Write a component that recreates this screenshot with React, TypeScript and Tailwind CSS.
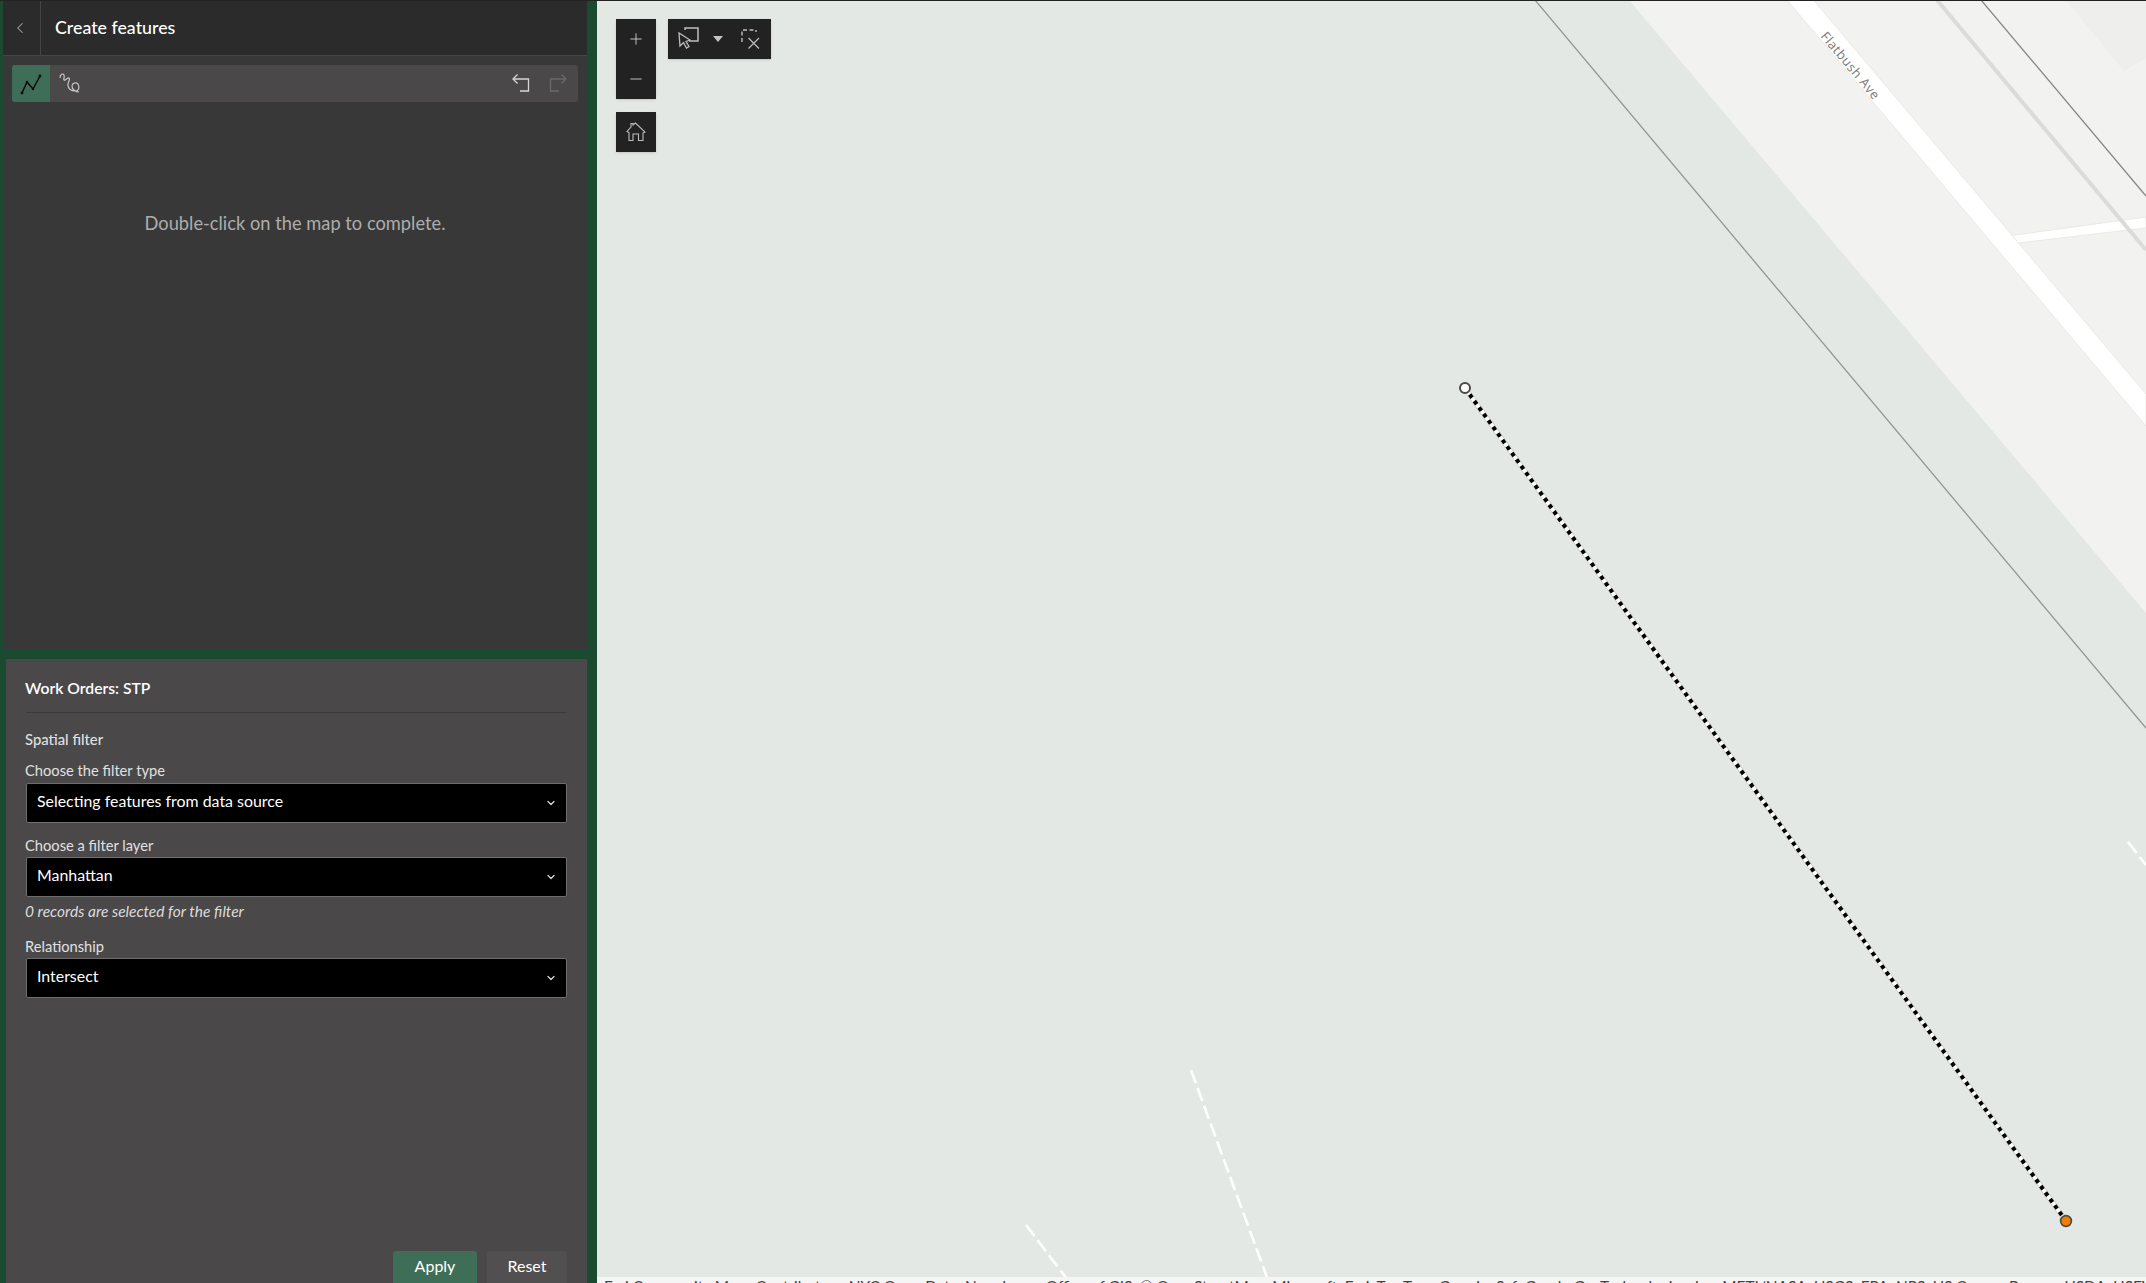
import { ReactNode } from "react";
import { ChevronDown, ChevronLeft, Minus, Plus } from "lucide-react";

// 左パネルのセレクトボックス
const Select = ({ value }: { value: string }) => (
  <div className="flex h-10 items-center justify-between rounded-[2px] border border-[#6e6e6e] bg-black pl-[10px] pr-[9px] text-[15.9px] text-white">
    <span className="-mt-[5px]">{value}</span>
    <ChevronDown size={12} strokeWidth={2.6} className="-mt-px text-[#d8d8d8]" />
  </div>
);

const MapButton = ({ children }: { children: ReactNode }) => (
  <div className="flex h-10 w-10 items-center justify-center text-[#d0d0d0]">{children}</div>
);

const LinesIcon = () => (
  <svg width="24" height="24" viewBox="0 0 24 24" fill="none">
    <path d="M3 21 L8 10 L14 17 L21 4" stroke="#0c0c0c" strokeWidth="1.5" />
    <circle cx="3" cy="21" r="1.4" fill="#0c0c0c" />
    <circle cx="8" cy="10" r="1.2" fill="#0c0c0c" />
    <circle cx="14" cy="17" r="1.2" fill="#0c0c0c" />
    <circle cx="21" cy="4" r="1.4" fill="#0c0c0c" />
  </svg>
);

const FreehandIcon = () => (
  <svg width="22" height="22" viewBox="0 0 22 22" fill="none" stroke="#c8c8c8" strokeWidth="1.2">
    <path d="M1 6 C1 2 4 1 5 3 C6 5 4 7 5 8 C7 9 8 5 10 6 C12 7 8 11 9 14 C10 17 13 19 16 19 C20 19 21 15 19 12 C17 10 13 11 13 14 C13 18 17 20 20 20" />
  </svg>
);

const UndoIcon = ({ flip, color }: { flip?: boolean; color: string }) => (
  <svg width="18" height="18" viewBox="0 0 18 18" fill="none" stroke={color} strokeWidth="1.3" className={flip ? "-scale-x-100" : ""}>
    <path d="M1 5 H16.5 V17 H8" />
    <path d="M5.5 0.5 L1 5 L5.5 9.5" />
  </svg>
);

const SelectIcon = () => (
  <svg width="24" height="24" viewBox="0 0 24 24" fill="none" stroke="#bdbdbd" strokeWidth="1.3">
    <path d="M8 3 V1 H21 V14 H12" strokeWidth="1.5" />
    <path d="M2 6 L3 19 L6.5 15.5 L9.5 21 L12 19.5 L9 14.5 L13 13 Z" fill="#222222" />
  </svg>
);

const ClearIcon = () => (
  <svg width="20" height="20" viewBox="0 0 20 20" fill="none" stroke="#bdbdbd" strokeWidth="1.4">
    <path d="M1 13 V1 H15 V3" strokeDasharray="4 2.5" />
    <path d="M7.5 9 L18 19.5 M18 9 L7.5 19.5" strokeWidth="1.2" />
  </svg>
);

const HomeIcon = () => (
  <svg width="20" height="20" viewBox="0 0 20 20" fill="none" stroke="#bdbdbd" strokeWidth="1.1">
    <path d="M1 9.5 L5 5 V1.5 H7 V3 L9.5 1 L19 10 L17 11 V18.5 H12.5 V12 H7 V18.5 H3 V10.5 Z" />
  </svg>
);

// 地図の描画内容。座標は画面全体に対する値 (地図の左端は x=597)
const MapDrawing = () => (
  <svg className="absolute inset-0 h-full w-full" viewBox="597 1 1549 1276" preserveAspectRatio="none">
    <polygon points="1629,0 2146,613 2146,0" fill="#f2f2f0" />
    <polygon points="2066,0 2124,71 2146,58 2146,0" fill="#eeeeec" />
    <polygon points="2008,236 2146,217 2146,228 2018,243" fill="#ffffff" stroke="#e9e9e7" strokeWidth="1" />
    <polygon points="1787,0 1813.5,0 2146,394 2146,426" fill="#ffffff" stroke="#e9e9e7" strokeWidth="1" />
    <line x1="1937" y1="0" x2="2146" y2="250" stroke="#dbdbd9" strokeWidth="4" />
    <line x1="1535" y1="0" x2="2146" y2="728" stroke="#8f9793" strokeWidth="1.3" />
    <line x1="1981" y1="0" x2="2146" y2="196" stroke="#858585" strokeWidth="1.3" />
    <text
      x="1850"
      y="70"
      fill="#7a7a7a"
      fontSize="13"
      fontFamily="Open Sans, sans-serif"
      letterSpacing="0.55"
      textAnchor="middle"
      transform="rotate(50 1850 66)"
    >
      Flatbush Ave
    </text>
    <line x1="1191" y1="1070" x2="1269" y2="1283" stroke="#ffffff" strokeWidth="2.6" strokeDasharray="14 5" />
    <line x1="1026" y1="1225" x2="1070" y2="1283" stroke="#ffffff" strokeWidth="2.6" strokeDasharray="14 5" />
    <line x1="2128" y1="842" x2="2146" y2="865" stroke="#ffffff" strokeWidth="2.6" strokeDasharray="14 5" />
    <line x1="1465" y1="388" x2="2066" y2="1221" stroke="#b9bcba" strokeWidth="5" />
    <line x1="1465" y1="388" x2="2066" y2="1221" stroke="#ffffff" strokeWidth="4" />
    <line x1="1465" y1="388" x2="2066" y2="1221" stroke="#000000" strokeWidth="4" strokeDasharray="4 4" />
    <circle cx="1465" cy="388" r="5" fill="#ffffff" stroke="#4a4a4a" strokeWidth="2" />
    <circle cx="2066" cy="1221" r="5.4" fill="#f57c00" stroke="#4a4a4a" strokeWidth="1.6" />
  </svg>
);

const App = () => {
  return (
    <div className="flex h-[1283px] w-[2146px] flex-col overflow-hidden bg-[#1a4a30] font-['Lato',sans-serif]">
      <div className="h-px shrink-0 bg-[#222222]" />
      <div className="flex min-h-0 flex-1">
        <aside className="flex w-[597px] shrink-0 flex-col gap-[10px] pl-[3px] pr-[10px]">
          <section className="h-[648px] shrink-0 bg-[#383838]">
            <header className="flex h-[55px] items-center border-b border-[#454545] bg-[#2b2b2b]">
              <div className="flex h-full w-[38px] items-center justify-center border-r border-[#454545] pr-[3px] text-[#a8a8a8]">
                <ChevronLeft size={18} strokeWidth={1.4} />
              </div>
              <h1 className="-mt-[1px] ml-[14px] text-[17.8px] font-medium text-white">Create features</h1>
            </header>
            <div className="mx-[9px] mt-[9px] flex h-[37px] items-center rounded-[3px] bg-[#4a4848]">
              <div className="flex h-full w-[38px] items-center justify-center rounded-l-[3px] bg-[#3f6e58]">
                <LinesIcon />
              </div>
              <div className="-mt-px ml-[9px] flex">
                <FreehandIcon />
              </div>
              <div className="-mt-[2px] ml-auto mr-[11px] flex items-center gap-[19px]">
                <UndoIcon color="#d6d6d6" />
                <UndoIcon flip color="#6a6a6a" />
              </div>
            </div>
            <p className="mt-[109px] text-center text-[18.3px] leading-6 text-[#adadad]">
              Double-click on the map to complete.
            </p>
          </section>
          <section className="ml-[3px] flex min-h-0 flex-1 flex-col bg-[#4a4848] pl-5 pr-5 pt-[19px]">
            <h2 className="-ml-px text-[15.7px] font-semibold leading-5 text-white">Work Orders: STP</h2>
            <div className="mt-[14px] border-b border-[#3c3c3c]" />
            <h3 className="-ml-px mt-4 text-[14.8px] font-medium leading-5 text-[#e0e0e0]">Spatial filter</h3>
            <label className="-ml-px mb-[3px] mt-[11px] block text-[14.7px] leading-5 text-[#e0e0e0]">Choose the filter type</label>
            <Select value="Selecting features from data source" />
            <label className="-ml-px mb-[2px] mt-3 block text-[14.7px] leading-5 text-[#e0e0e0]">Choose a filter layer</label>
            <Select value="Manhattan" />
            <p className="-ml-px mt-[5px] text-[15.5px] italic leading-[18px] text-[#dcdcdc]">0 records are selected for the filter</p>
            <label className="-ml-px mb-[2px] mt-4 block text-[14.7px] leading-5 text-[#e0e0e0]">Relationship</label>
            <Select value="Intersect" />
            <div className="mt-auto flex justify-end gap-[10px]">
              <button className="h-8 w-[84px] rounded-t-[3px] bg-[#3f6e58] pb-[2px] text-[16px] text-white">Apply</button>
              <button className="h-8 w-[80px] rounded-t-[3px] bg-[#514f4f] pb-[2px] text-[16px] text-white">Reset</button>
            </div>
          </section>
        </aside>
        <main className="flex min-w-0 flex-1 flex-col">
          <div className="relative min-h-0 flex-1 bg-[#e3e8e4]">
            <MapDrawing />
            <div className="absolute left-[19px] top-[18px] flex flex-col gap-[13px]">
              <div className="flex flex-col bg-[#222222] shadow-sm">
                <MapButton>
                  <Plus size={18} strokeWidth={1.2} />
                </MapButton>
                <MapButton>
                  <Minus size={18} strokeWidth={1.2} />
                </MapButton>
              </div>
              <div className="bg-[#222222] shadow-sm">
                <MapButton>
                  <HomeIcon />
                </MapButton>
              </div>
            </div>
            <div className="absolute left-[71px] top-[18px] flex h-10 w-[103px] items-center bg-[#222222] pl-[9px] shadow-sm">
              <SelectIcon />
              <div className="ml-[12px] h-0 w-0 border-x-[5px] border-t-[6px] border-x-transparent border-t-[#c4c4c4]" />
              <div className="ml-[18px] flex">
                <ClearIcon />
              </div>
            </div>
          </div>
          <div className="h-[6px] shrink-0 overflow-hidden whitespace-nowrap bg-[#f5f5f5] pl-[7px] text-[15.4px] leading-[18px] text-[#444444]">
            Esri Community Maps Contributors, NYC Open Data, New Jersey Office of GIS, © OpenStreetMap, Microsoft, Esri, TomTom, Garmin, SafeGraph, GeoTechnologies, Inc, METI/NASA, USGS, EPA, NPS, US Census Bureau, USDA, USFWS
          </div>
        </main>
      </div>
    </div>
  );
};

export default App;
